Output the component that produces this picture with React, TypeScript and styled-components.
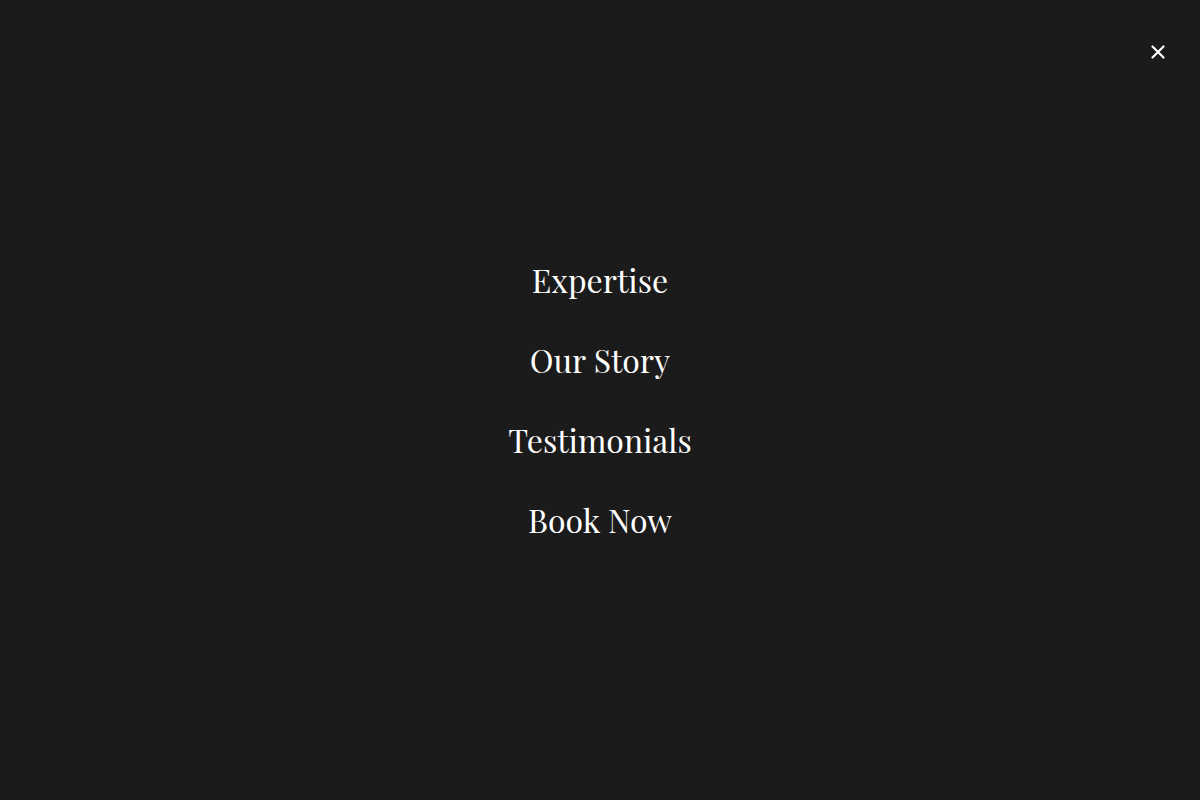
import React from "react";
import styled, { createGlobalStyle } from "styled-components";

const Global = createGlobalStyle`
  html, body { margin: 0; padding: 0; background: #1b1b1b; }
  #root { min-height: 100vh; }
`;

const Overlay = styled.div`
  position: relative;
  height: 100vh;
  width: 100%;
  background: #1b1b1b;
  display: flex;
  align-items: center;
  justify-content: center;
`;

const CloseButton = styled.button`
  position: absolute;
  top: 40px;
  right: 30px;
  width: 24px;
  height: 24px;
  padding: 0;
  border: none;
  background: transparent;
  color: #ffffff;
  display: flex;
  align-items: center;
  justify-content: center;
  cursor: pointer;
`;

const Nav = styled.nav`
  display: flex;
  flex-direction: column;
  align-items: center;
  gap: 32px;
`;

const NavLink = styled.a`
  font-family: "Playfair Display", "DejaVu Serif", serif;
  font-size: 32px;
  line-height: 48px;
  color: #ffffff;
  text-decoration: none;
`;

export default function App() {
  const items = ["Expertise", "Our Story", "Testimonials", "Book Now"];
  return (
    <>
      <Global />
      <Overlay>
        <CloseButton aria-label="Close menu">
          <svg width="14" height="14" viewBox="0 0 14 14">
            <path d="M1.5 1.5 L12.5 12.5 M12.5 1.5 L1.5 12.5" stroke="#fff" strokeWidth="2.2" strokeLinecap="round" />
          </svg>
        </CloseButton>
        <Nav>
          {items.map((t) => (
            <NavLink key={t} href="#">{t}</NavLink>
          ))}
        </Nav>
      </Overlay>
    </>
  );
}
